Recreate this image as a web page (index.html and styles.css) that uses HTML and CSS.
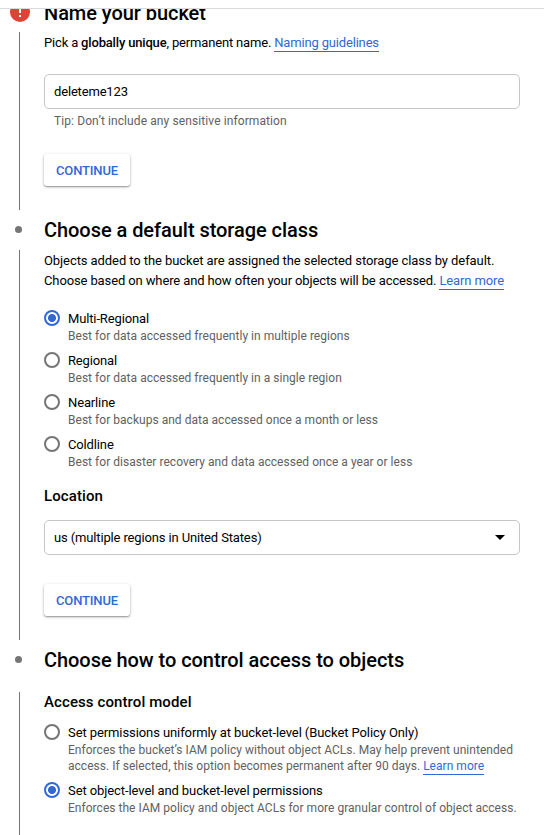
FILE: index.html
```html
<!DOCTYPE html>
<html lang="en">
<head>
<meta charset="utf-8">
<title>Create a bucket</title>
<link rel="stylesheet" href="styles.css">
</head>
<body>
<div class="topbar"></div>
<main class="viewport">
  <div class="stepper">
    <section class="step">
      <header class="step-header">
        <span class="marker"><svg class="error-icon" width="20" height="20" viewBox="0 0 20 20"><circle cx="10" cy="10" r="10" fill="#db4437"/><path d="M9 5h2v6H9zM9 13h2v2H9z" fill="#fff"/></svg></span>
        <h2 class="title first">Name your bucket</h2>
      </header>
      <div class="step-body">
        <p class="text tight">Pick a <b>globally unique</b>, permanent name. <a class="link">Naming guidelines</a></p>
        <div class="field name-field">deleteme123</div>
        <div class="tip">Tip: Don’t include any sensitive information</div>
        <button class="button name-button">CONTINUE</button>
      </div>
    </section>
    <section class="step">
      <header class="step-header">
        <span class="marker"><span class="dot"></span></span>
        <h2 class="title">Choose a default storage class</h2>
      </header>
      <div class="step-body">
        <p class="text">Objects added to the bucket are assigned the selected storage class by default.<br><span class="second-line">Choose based on where and how often your objects will be accessed. <a class="link">Learn more</a></span></p>
        <div class="radios class-radios">
          <div class="radio"><span class="circle checked"></span><div class="label tight">Multi-Regional</div><div class="desc">Best for data accessed frequently in multiple regions</div></div>
          <div class="radio"><span class="circle"></span><div class="label tight">Regional</div><div class="desc">Best for data accessed frequently in a single region</div></div>
          <div class="radio"><span class="circle"></span><div class="label tight">Nearline</div><div class="desc">Best for backups and data accessed once a month or less</div></div>
          <div class="radio"><span class="circle"></span><div class="label tight">Coldline</div><div class="desc">Best for disaster recovery and data accessed once a year or less</div></div>
        </div>
        <h3 class="subtitle location">Location</h3>
        <div class="field select">us (multiple regions in United States)<svg width="10" height="5" viewBox="0 0 10 5"><path d="M0 0h10L5 5z" fill="#000"/></svg></div>
        <button class="button location-button">CONTINUE</button>
      </div>
    </section>
    <section class="step">
      <header class="step-header spaced">
        <span class="marker"><span class="dot"></span></span>
        <h2 class="title">Choose how to control access to objects</h2>
      </header>
      <div class="step-body last">
        <h3 class="subtitle">Access control model</h3>
        <div class="radios access-radios">
          <div class="radio"><span class="circle"></span><div class="label">Set permissions uniformly at bucket-level (Bucket Policy Only)</div><div class="desc">Enforces the bucket’s IAM policy without object ACLs. May help prevent unintended<br>access. If selected, this option becomes permanent after 90 days. <a class="link">Learn more</a></div></div>
          <div class="radio"><span class="circle checked"></span><div class="label">Set object-level and bucket-level permissions</div><div class="desc">Enforces the IAM policy and object ACLs for more granular control of object access.</div></div>
        </div>
      </div>
    </section>
  </div>
</main>
</body>
</html>
```
FILE: styles.css
```css
* { box-sizing: border-box; }
body {
  margin: 0;
  height: 835px;
  overflow: hidden;
  display: flex;
  flex-direction: column;
  background: #fff;
  color: #000;
  font: 13px/20px Roboto, sans-serif;
}
h2, h3, p { margin: 0; }
.topbar { flex: none; height: 9px; border-bottom: 1px solid #dadada; }
.viewport { flex: 1; min-height: 0; overflow: hidden; }
.stepper { margin-top: -17px; }
.step-header { display: flex; align-items: center; height: 40px; }
.step-header.spaced { margin-bottom: 12px; }
.marker { width: 44px; padding-left: 10px; display: flex; }
.error-icon { display: block; }
.dot { width: 7px; height: 7px; margin: -2px 0 0 5.4px; border-radius: 50%; background: #757575; }
.title { font-size: 20px; line-height: 24px; font-weight: 500; letter-spacing: -.05px; white-space: nowrap; }
.title.first { padding-top: 2px; }
.step-body {
  margin-left: 19px;
  padding: 1px 24px 24px;
  border-left: 1px solid #757575;
}
.step-body.last { height: 160px; padding-top: 0; }
.text { white-space: nowrap; letter-spacing: -.08px; }
.second-line { letter-spacing: -.12px; }
.tight, .field { letter-spacing: -.17px; }
.text b { font-weight: 500; }
.link { color: #3367d6; border-bottom: 1px solid #3367d6; padding-bottom: 1px; }
.field {
  display: flex;
  align-items: center;
  height: 35px;
  padding: 0 14px 0 9px;
  border: 1px solid #c6c6c6;
  border-radius: 5px;
}
.name-field { margin-top: 21px; }
.select { justify-content: space-between; margin-top: 14px; letter-spacing: -.14px; }
.tip { margin: 4px 0 0 10px; font-size: 12px; line-height: 16px; color: #616161; letter-spacing: .1px; }
.button {
  display: block;
  width: 86px;
  height: 32px;
  padding: 1px 0 0;
  border: 0;
  border-radius: 3px;
  background: #fff;
  color: #3367d6;
  font: 500 13px/20px Roboto, sans-serif;
  letter-spacing: -.15px;
  box-shadow: 0 1px 3px rgba(0, 0, 0, .3), 0 1px 1px rgba(0, 0, 0, .2);
}
.name-button { margin-top: 25px; }
.location-button { margin-top: 29px; }
.radios { display: grid; gap: 8px; }
.class-radios { margin-top: 19px; }
.access-radios { margin-top: 12px; }
.radio { display: grid; grid-template-columns: 24px 1fr; white-space: nowrap; }
.circle { width: 16px; height: 16px; border: 2px solid #757575; border-radius: 50%; }
.circle.checked { border-color: #3367d6; background: radial-gradient(circle, #3367d6 3.6px, transparent 4.4px); }
.label { line-height: 18px; letter-spacing: -.09px; }
.label.tight { letter-spacing: -.14px; }
.desc { grid-column: 2; font-size: 12px; line-height: 16px; color: #616161; letter-spacing: .03px; }
.subtitle { font-size: 15px; line-height: 20px; font-weight: 500; letter-spacing: .1px; }
.location { margin-top: 16px; }
```
